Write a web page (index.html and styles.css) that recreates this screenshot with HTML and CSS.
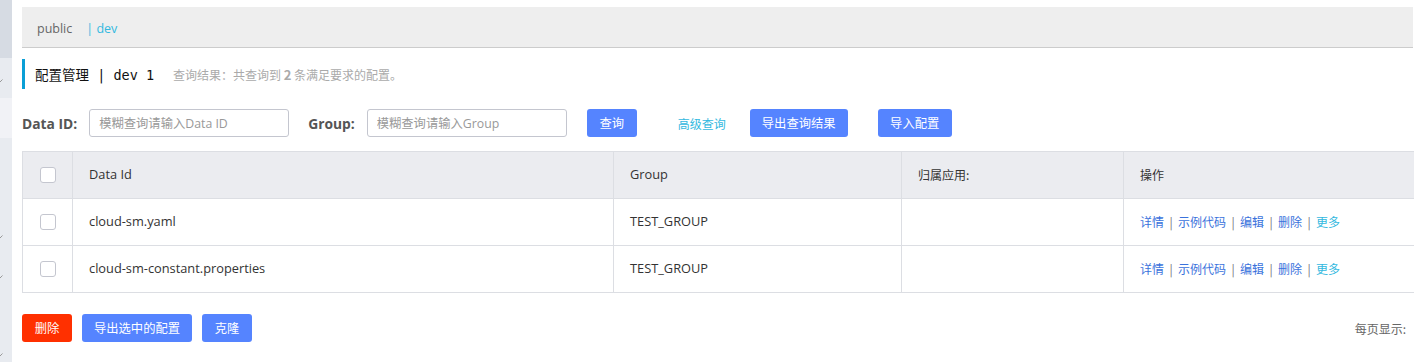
FILE: index.html
```html
<!DOCTYPE html>
<html lang="zh-CN">
<head>
<meta charset="utf-8">
<title>配置管理</title>
<link rel="stylesheet" href="styles.css">
</head>
<body>
<div class="app">
  <aside class="sidebar">
    <div class="sb-top"></div>
    <div class="sb-item"><svg class="chev" viewBox="0 0 6 4" width="6" height="4"><path d="M0.5 0.5 L3 3 L5.5 0.5" fill="none" stroke="#999" stroke-width="1"/></svg></div>
    <div class="sb-item sb-light"></div>
    <div class="sb-rest">
      <svg class="chev c1" viewBox="0 0 6 4" width="6" height="4"><path d="M0.5 0.5 L3 3 L5.5 0.5" fill="none" stroke="#999" stroke-width="1"/></svg>
      <svg class="chev c2" viewBox="0 0 6 4" width="6" height="4"><path d="M0.5 0.5 L3 3 L5.5 0.5" fill="none" stroke="#999" stroke-width="1"/></svg>
      <svg class="chev c3" viewBox="0 0 6 4" width="6" height="4"><path d="M0.5 0.5 L3 3 L5.5 0.5" fill="none" stroke="#999" stroke-width="1"/></svg>
    </div>
  </aside>
  <main class="main">
    <div class="crumbs">
      <span class="ns">public</span>
      <span class="ns active">| dev</span>
    </div>
    <div class="title">
      <span class="title-text">配置管理 | dev 1</span>
      <span class="summary">查询结果：共查询到 <b>2</b> 条满足要求的配置。</span>
    </div>
    <div class="search">
      <label class="lbl">Data ID:</label>
      <input class="inp" type="text" placeholder="模糊查询请输入Data ID">
      <label class="lbl lbl-group">Group:</label>
      <input class="inp" type="text" placeholder="模糊查询请输入Group">
      <button class="btn btn-query">查询</button>
      <a class="adv">高级查询</a>
      <button class="btn btn-export">导出查询结果</button>
      <button class="btn btn-import">导入配置</button>
    </div>
    <table class="grid">
      <colgroup>
        <col class="c-check"><col class="c-id"><col class="c-group"><col class="c-app"><col class="c-op">
      </colgroup>
      <thead>
        <tr>
          <th class="chk"><span class="box"></span></th>
          <th>Data Id</th>
          <th>Group</th>
          <th class="cjk">归属应用:</th>
          <th class="cjk">操作</th>
        </tr>
      </thead>
      <tbody>
        <tr>
          <td class="chk"><span class="box"></span></td>
          <td>cloud-sm.yaml</td>
          <td>TEST_GROUP</td>
          <td></td>
          <td class="ops"><a>详情</a><span class="sep">|</span><a>示例代码</a><span class="sep">|</span><a>编辑</a><span class="sep">|</span><a>删除</a><span class="sep">|</span><a class="more">更多</a></td>
        </tr>
        <tr>
          <td class="chk"><span class="box"></span></td>
          <td>cloud-sm-constant.properties</td>
          <td>TEST_GROUP</td>
          <td></td>
          <td class="ops"><a>详情</a><span class="sep">|</span><a>示例代码</a><span class="sep">|</span><a>编辑</a><span class="sep">|</span><a>删除</a><span class="sep">|</span><a class="more">更多</a></td>
        </tr>
      </tbody>
    </table>
    <div class="footer">
      <button class="btn btn-del">删除</button>
      <button class="btn btn-exp-sel">导出选中的配置</button>
      <button class="btn btn-clone">克隆</button>
      <span class="pager">每页显示:</span>
    </div>
  </main>
</div>
</body>
</html>
```

FILE: styles.css
```css
* { box-sizing: border-box; }
html, body { margin: 0; padding: 0; background: #fff; overflow: hidden; }
body {
  font-family: "Open Sans", "Noto Sans", "Noto Sans CJK SC", sans-serif;
  font-size: 12px;
  color: #333;
  width: 1414px;
  height: 362px;
}
.app { display: flex; height: 362px; }

.sidebar { width: 12px; flex: none; display: flex; flex-direction: column; background: #e8ebf0; }
.sb-top { height: 58px; background: #d6dbe3; }
.sb-item { height: 40px; background: #e8ebf0; position: relative; }
.sb-light { background: #f1f2f6; }
.sb-rest { flex: 1; position: relative; background: #e8ebf0; }
.chev { position: absolute; left: -3px; }
.sb-item .chev { top: 21px; }
.c1 { top: 97px; }
.c2 { top: 137px; }
.c3 { top: 215px; }

.main { width: 1391px; margin-left: 10px; padding-top: 7px; flex: none; }

.crumbs {
  height: 41px;
  background: #eeeeee;
  border-bottom: 1px solid #cccccc;
  display: flex;
  align-items: center;
  padding-left: 15px;
  padding-top: 2px;
  font-size: 12.5px;
  color: #666;
}
.ns { margin-right: 14px; }
.ns.active { color: #33b9e0; }

.title {
  margin-top: 11px;
  height: 30px;
  border-left: 3px solid #0a9fd6;
  padding-left: 10px;
  display: flex;
  align-items: center;
}
.title-text {
  font-family: "DejaVu Sans Mono", "Noto Sans CJK SC", monospace;
  font-size: 13.5px;
  color: #111;
}
.summary {
  margin-left: 19px;
  color: #aaa;
  font-size: 12px;
  font-family: "Noto Sans CJK SC", sans-serif;
}
.summary b { font-weight: bold; color: #aaa; font-size: 13px; }

.search {
  margin-top: 20px;
  height: 28px;
  display: flex;
  align-items: center;
}
.lbl { font-weight: bold; color: #555; font-size: 13.8px; margin-right: 12px; }
.lbl-group { margin-left: 19px; }
.inp {
  width: 200px;
  height: 28px;
  border: 1px solid #c4c6cf;
  border-radius: 3px;
  padding: 0 9px;
  font-family: "Open Sans", "Noto Sans CJK SC", sans-serif;
  font-size: 12.3px;
  color: #333;
  outline: none;
}
.inp::placeholder { color: #999; }

.btn {
  height: 28px;
  border: none;
  border-radius: 3px;
  background: #5584ff;
  color: #fff;
  font-family: "Noto Sans CJK SC", sans-serif;
  font-size: 12.3px;
  padding: 0;
  cursor: pointer;
}
.btn-query { margin-left: 20px; width: 50px; }
.adv { margin-left: 41px; color: #33b9e0; font-family: "Noto Sans CJK SC", sans-serif; font-size: 12px; }
.btn-export { margin-left: 24px; width: 98px; }
.btn-import { margin-left: 30px; width: 74px; }

.grid {
  margin-top: 14px;
  border-collapse: collapse;
  table-layout: fixed;
  width: 1480px;
}
.c-check { width: 50px; }
.c-id { width: 541px; }
.c-group { width: 288px; }
.c-app { width: 222px; }
.c-op { width: 379px; }
.grid th, .grid td {
  border: 1px solid #dcdee3;
  height: 47px;
  padding: 0 16px 2px;
  text-align: left;
  font-weight: normal;
  color: #333;
  font-size: 12.8px;
  white-space: nowrap;
}
.grid th { background: #ebecf0; }
.grid .cjk { font-size: 12px; font-family: "Noto Sans CJK SC", sans-serif; }
.grid .chk { padding: 0; }
.box {
  display: block;
  margin: 0 auto;
  width: 16px;
  height: 16px;
  border: 1px solid #c4c6cf;
  border-radius: 3px;
  background: #fff;
}
.grid .ops { font-size: 12px; font-family: "Noto Sans CJK SC", sans-serif; }
.ops a { color: #3a72dc; }
.ops a.more { color: #33b9e0; }
.sep { display: inline-block; width: 14px; text-align: center; color: #777; }

.footer {
  margin-top: 21px;
  display: flex;
  align-items: center;
  height: 28px;
}
.btn-del { background: #ff3000; width: 50px; }
.btn-exp-sel { margin-left: 10px; width: 110px; }
.btn-clone { margin-left: 10px; width: 50px; }
.pager { margin-left: auto; margin-right: 7px; color: #666; font-family: "Noto Sans CJK SC", sans-serif; font-size: 12px; }
```
